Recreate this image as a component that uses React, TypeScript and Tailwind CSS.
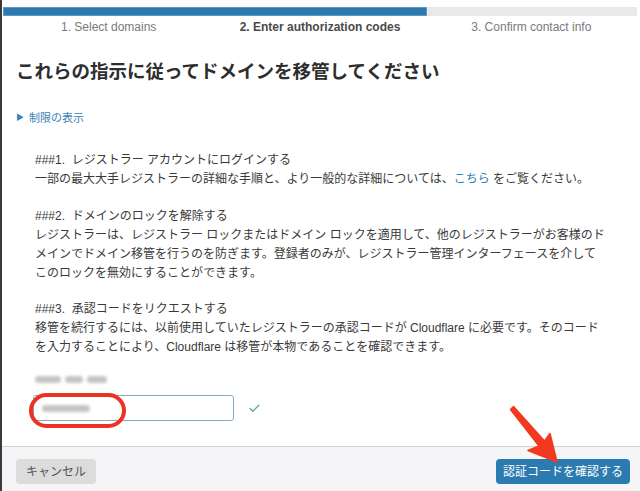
import { Check } from 'lucide-react';

const font = 'font-["Liberation_Sans","Noto_Sans_CJK_JP",sans-serif]';

function Steps() {
  return (
    <div className="ml-px mr-[3px]">
      <div className="mt-[7px] flex h-[9px] bg-[#e9e9e9]">
        <div className="h-full w-[424px] border border-[#5c9bc7] bg-[#2d78ad]" />
      </div>
      <div className="mt-[2px] grid grid-cols-3 text-center text-[12px] leading-[18px] text-[#7a7a7a]">
        <span>1. Select domains</span>
        <span className="font-bold text-[#4a4a4a]">2. Enter authorization codes</span>
        <span>3. Confirm contact info</span>
      </div>
    </div>
  );
}

function Blur({ w }: { w: number }) {
  return <span className="inline-block h-[7px] rounded-sm bg-[#c4c4c4] blur-[1.5px]" style={{ width: w }} />;
}

function Arrow() {
  return (
    <svg className="absolute left-[500px] top-[400px]" width="65" height="70" viewBox="0 0 65 70">
      <polygon
        points="11.5,6.5 42.5,41 48,33.5 55,62 26,50.5 37,46 8.5,9.5"
        fill="#f2391f"
        stroke="#f2391f"
        strokeWidth="1.5"
        strokeLinejoin="round"
      />
    </svg>
  );
}

export default function App() {
  return (
    <div className={`relative flex h-[491px] w-[640px] flex-col overflow-hidden border-l-2 border-[#3a3a3a] bg-white ${font}`}>
      <Steps />

      <div className="flex-1 px-[14px]">
        <h1 className="mt-[23px] text-[18.5px] font-bold leading-[26px] text-[#2e2e2e]">
          これらの指示に従ってドメインを移管してください
        </h1>

        <div className="mt-[25px] flex items-center gap-[5px] text-[11px] leading-[16px] text-[#3b82b5]">
          <span className="text-[8px]">▶</span>
          <span>制限の表示</span>
        </div>

        <div className="mt-[25px] whitespace-nowrap pl-[19px] text-[12px] leading-[19px] text-[#3a3a3a]">
          <p>###1.&nbsp; レジストラー アカウントにログインする</p>
          <p>
            一部の最大大手レジストラーの詳細な手順と、より一般的な詳細については、
            <span className="text-[#2f7db5]">こちら</span> をご覧ください。
          </p>

          <p className="mt-[18px]">###2.&nbsp; ドメインのロックを解除する</p>
          <p>
            レジストラーは、レジストラー ロックまたはドメイン ロックを適用して、他のレジストラーがお客様のド
            <br />
            メインでドメイン移管を行うのを防ぎます。登録者のみが、レジストラー管理インターフェースを介して
            <br />
            このロックを無効にすることができます。
          </p>

          <p className="mt-[17px]">###3.&nbsp; 承認コードをリクエストする</p>
          <p>
            移管を続行するには、以前使用していたレジストラーの承認コードが Cloudflare に必要です。そのコード
            <br />
            を入力することにより、Cloudflare は移管が本物であることを確認できます。
          </p>

          <div className="mt-[15px] flex h-[14px] items-center gap-[4px]">
            <Blur w={26} />
            <Blur w={18} />
            <Blur w={20} />
          </div>

          <div className="mt-[9px] flex items-center gap-[14px]">
            <div className="relative -ml-[2px] flex h-[26px] w-[201px] items-center rounded-[3px] border border-[#86a9c2] px-[8px]">
              <Blur w={48} />
              <div className="absolute -left-[5px] -top-[3px] h-[35px] w-[97px] rounded-full border-[4px] border-[#ec3323]" />
            </div>
            <Check className="h-[13px] w-[13px] text-[#5db37e]" strokeWidth={2.5} />
          </div>
        </div>
      </div>

      <div className="flex h-[45px] items-start justify-between border-t border-[#d2d2d2] bg-[#f5f5f7] px-[14px] pt-[12px]">
        <button className="h-[25px] w-[80px] rounded-[4px] bg-[#dcdcdd] text-[12px] text-[#555]">キャンセル</button>
        <button className="mr-[-4px] h-[25px] w-[134px] rounded-[4px] bg-[#2c7bb0] text-[12px] text-white">
          認証コードを確認する
        </button>
      </div>

      <Arrow />
    </div>
  );
}
